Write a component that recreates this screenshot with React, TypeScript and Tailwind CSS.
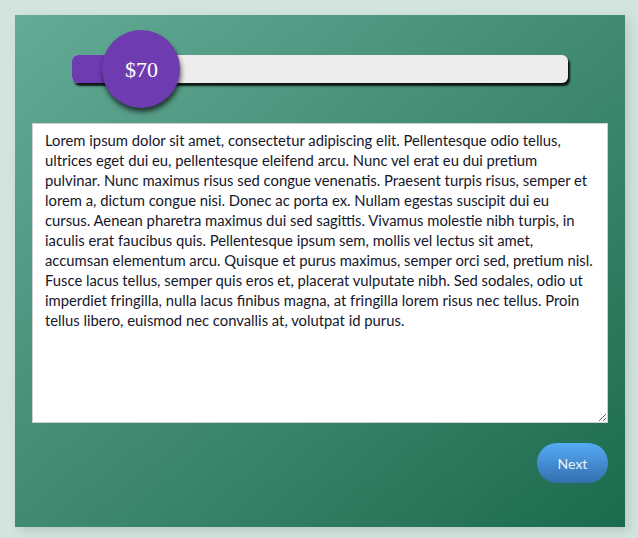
import { useState } from "react"

const lorem =
  "Lorem ipsum dolor sit amet, consectetur adipiscing elit. Pellentesque odio tellus, ultrices eget dui eu, pellentesque eleifend arcu. Nunc vel erat eu dui pretium pulvinar. Nunc maximus risus sed congue venenatis. Praesent turpis risus, semper et lorem a, dictum congue nisi. Donec ac porta ex. Nullam egestas suscipit dui eu cursus. Aenean pharetra maximus dui sed sagittis. Vivamus molestie nibh turpis, in iaculis erat faucibus quis. Pellentesque ipsum sem, mollis vel lectus sit amet, accumsan elementum arcu. Quisque et purus maximus, semper orci sed, pretium nisl. Fusce lacus tellus, semper quis eros et, placerat vulputate nibh. Sed sodales, odio ut imperdiet fringilla, nulla lacus finibus magna, at fringilla lorem risus nec tellus. Proin tellus libero, euismod nec convallis at, volutpat id purus."

export default function App() {
  const [price] = useState(70)
  const pct = 14

  return (
    <div className="min-h-[538px] w-[638px] bg-[#d3e4df] p-[15px] pr-[13px] pb-[11px]">
      <div className="flex h-[512px] flex-col bg-gradient-to-br from-[#64ab97] to-[#1a6b4e] px-[17px] pt-[40px] shadow-[4px_4px_10px_rgba(0,0,0,0.12)]">
        {/* Price slider */}
        <div className="relative mx-[40px] h-[28px] rounded-[6px] bg-[#ededed] shadow-[2px_3px_2px_rgba(0,0,0,0.85)]">
          <div className="h-full rounded-l-[6px] bg-[#6f3bb0]" style={{ width: `${pct}%` }} />
          <div
            className="absolute top-1/2 flex h-[78px] w-[78px] -translate-x-1/2 -translate-y-1/2 items-center justify-center rounded-full bg-[#6f3bb0] shadow-[1px_4px_5px_rgba(0,0,0,0.65)]"
            style={{ left: `${pct}%` }}
          >
            <span className="font-['Liberation_Serif',serif] text-[22px] text-white">${price}</span>
          </div>
        </div>

        {/* Text area */}
        <textarea
          readOnly
          defaultValue={lorem}
          className="mt-[40px] h-[300px] w-full resize-y border border-[#cfcfcf] bg-white px-[12px] py-[6px] font-['Lato',sans-serif] text-[14.8px] leading-[20px] text-[#16162a] outline-none"
        />

        <div className="mt-[20px] flex justify-end">
          <button className="h-[40px] w-[71px] rounded-full bg-gradient-to-b from-[#57abf6] to-[#336fae] font-['Lato',sans-serif] text-[14px] text-[#eaf4ff]">
            Next
          </button>
        </div>
      </div>
    </div>
  )
}
